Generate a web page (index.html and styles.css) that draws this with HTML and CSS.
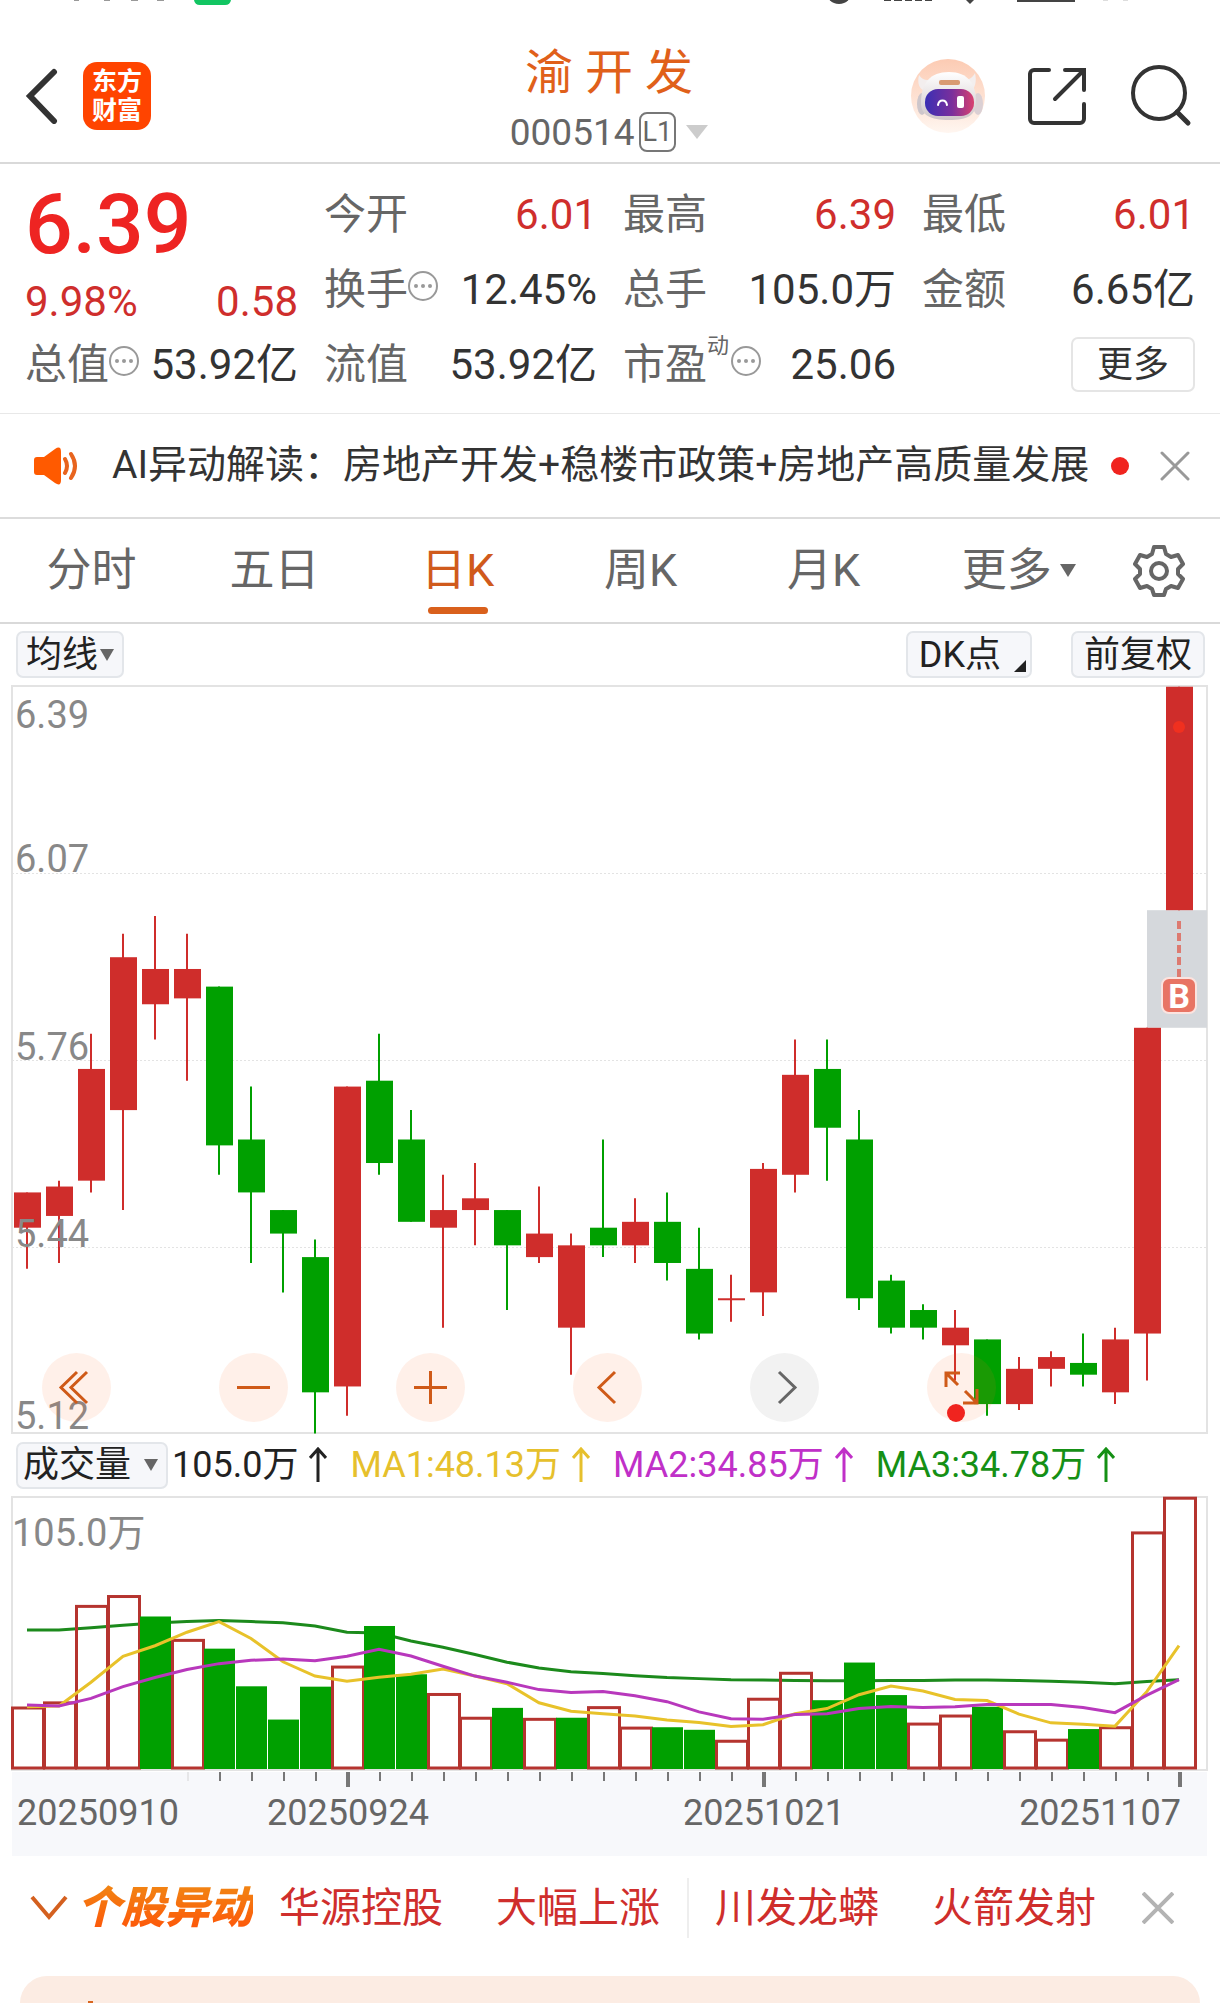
FILE: index.html
```html
<!DOCTYPE html>
<html lang="zh-CN">
<head>
<meta charset="utf-8">
<meta name="viewport" content="width=device-width, initial-scale=1">
<title>渝开发 000514</title>
<link rel="stylesheet" href="styles.css">
</head>
<body>
<header class="header">
  <svg class="status" viewBox="0 0 1220 6" aria-hidden="true">
    <g fill="#999"><rect x="74" width="5" height="1"/><rect x="104" width="6" height="1"/><rect x="131" width="7" height="1"/><rect x="157" width="7" height="1"/></g>
    <path d="M194 -6h37v6a6 6 0 0 1-6 5h-25a6 6 0 0 1-6-5z" fill="#12c562"/>
    <g fill="#444"><circle cx="839" cy="-9" r="13"/><rect x="884" width="7" height="1"/><rect x="894" width="8" height="1"/><rect x="905" width="7" height="1"/><rect x="915" width="7" height="1"/><rect x="925" width="7" height="1"/><path d="M966 0h8l-4 4z"/><rect x="1017" width="58" height="2"/></g>
    <g fill="#ddd"><rect x="1103" width="5" height="1"/><rect x="1123" width="5" height="1"/></g>
  </svg>
  <div class="header-side">
    <button class="icon-btn" aria-label="返回"><svg width="34" height="56" viewBox="0 0 34 56"><path d="M30 4 6 28 30 53" fill="none" stroke="#333" stroke-width="6" stroke-linecap="round"/></svg></button>
    <div class="logo"><span>东方</span><span>财富</span></div>
  </div>
  <div class="title">
    <h1>渝 开 发</h1>
    <button class="code">000514<span class="level">L1</span><svg width="22" height="14" viewBox="0 0 22 14"><path d="M0 0h22L11 14z" fill="#ccc"/></svg></button>
  </div>
  <div class="header-side header-tools">
    <button class="icon-btn" aria-label="智能助手">
      <svg width="76" height="76" viewBox="0 0 76 76">
        <defs>
          <linearGradient id="halo" x1="0" y1="0" x2="0" y2="1"><stop offset="0" stop-color="#fccbb3"/><stop offset="1" stop-color="#fff6f0"/></linearGradient>
          <linearGradient id="visor"><stop offset="0" stop-color="#3a2fb4"/><stop offset=".55" stop-color="#7a2f9c"/><stop offset="1" stop-color="#d8406f"/></linearGradient>
          <linearGradient id="shell" x1="0" y1="0" x2="0" y2="1"><stop offset="0" stop-color="#fff"/><stop offset="1" stop-color="#cfc6c8"/></linearGradient>
        </defs>
        <circle cx="38" cy="38" r="37" fill="url(#halo)"/>
        <path d="M9 17c-2 8 0 14 6 16l11-11c-8 1-14 0-17-5zM65 15c2 9 0 15-4 18l-12-11c8 1 13-1 16-7z" fill="#f3eeee"/>
        <ellipse cx="12" cy="46" rx="5" ry="11" fill="#cdc6cb"/><ellipse cx="68" cy="46" rx="5" ry="11" fill="#dbd0d4"/>
        <path d="M11 45c0-20 9-31 28-31s27 12 27 30c0 13-8 18-27 18S11 57 11 45z" fill="url(#shell)"/>
        <rect x="29" y="22" width="21" height="5" rx="2" fill="#d99b73"/>
        <rect x="15" y="31" width="49" height="27" rx="13" fill="url(#visor)"/>
        <path d="M28 47c1-6 8-6 9 0" fill="none" stroke="#fff" stroke-width="2" stroke-linecap="round"/><rect x="47" y="38" width="7" height="12" rx="2" fill="#fff"/>
      </svg>
    </button>
    <button class="icon-btn" aria-label="分享"><svg width="60" height="60" viewBox="0 0 60 60"><path d="M22 4H7a4 4 0 0 0-4 4v45a4 4 0 0 0 4 4h46a4 4 0 0 0 4-4V38M38 4h19v20M56 5 28 33" fill="none" stroke="#333" stroke-width="4" stroke-linecap="round"/></svg></button>
    <button class="icon-btn" aria-label="搜索"><svg width="62" height="62" viewBox="0 0 62 62"><circle cx="29" cy="28" r="26" fill="none" stroke="#333" stroke-width="4"/><path d="m47 47 11 11" stroke="#333" stroke-width="5" stroke-linecap="round"/></svg></button>
  </div>
</header>

<section class="quote">
  <div class="quote-main">
    <strong>6.39</strong>
    <div class="pair up"><span>9.98%</span><span>0.58</span></div>
  </div>
  <div class="pair"><span class="name">今开</span><span class="up">6.01</span></div>
  <div class="pair"><span class="name">最高</span><span class="up">6.39</span></div>
  <div class="pair"><span class="name">最低</span><span class="up">6.01</span></div>
  <div class="pair"><span class="name">换手<svg class="info" viewBox="0 0 30 30"><use href="#info"/></svg></span><span>12.45%</span></div>
  <div class="pair"><span class="name">总手</span><span>105.0万</span></div>
  <div class="pair"><span class="name">金额</span><span>6.65亿</span></div>
  <div class="pair"><span class="name">总值<svg class="info" viewBox="0 0 30 30"><use href="#info"/></svg></span><span>53.92亿</span></div>
  <div class="pair"><span class="name">流值</span><span>53.92亿</span></div>
  <div class="pair"><span class="name">市盈<sup>动</sup><svg class="info" viewBox="0 0 30 30"><use href="#info"/></svg></span><span>25.06</span></div>
  <div class="pair pair-end"><button class="more">更多</button></div>
  <svg class="defs" aria-hidden="true"><symbol id="info" viewBox="0 0 30 30"><circle cx="15" cy="15" r="14" fill="none" stroke="#999" stroke-width="2"/><g fill="#999"><circle cx="8" cy="15" r="2"/><circle cx="15" cy="15" r="2"/><circle cx="22" cy="15" r="2"/></g></symbol></svg>
</section>

<section class="notice">
  <svg width="44" height="38" viewBox="0 0 44 38" aria-hidden="true"><path d="M0 13q0-3 3-3h7L21 2q6-4 6 3v28q0 7-6 3L10 28H3q-3 0-3-3z" fill="#ff5a00"/><path d="M31 12q4 7 0 14M37 7q8 12 0 24" fill="none" stroke="#e8641e" stroke-width="4" stroke-linecap="round"/></svg>
  <a href="#notice">AI异动解读：房地产开发+稳楼市政策+房地产高质量发展</a>
  <i class="dot"></i>
  <button class="icon-btn" aria-label="关闭提示"><svg width="30" height="30" viewBox="0 0 30 30"><path d="m2 2 26 26M28 2 2 28" stroke="#999" stroke-width="3" stroke-linecap="round"/></svg></button>
</section>

<nav class="tabs">
  <button>分时</button>
  <button>五日</button>
  <button class="active">日K</button>
  <button>周K</button>
  <button>月K</button>
  <button>更多<svg width="16" height="13" viewBox="0 0 16 13"><path d="M0 0h16L8 13z" fill="#666"/></svg></button>
  <button class="settings" aria-label="设置"><svg width="52" height="52" viewBox="0 0 52 52" fill="none" stroke="#666" stroke-width="4" stroke-linejoin="round"><path d="M21 2h10l2 7 5 3 7-2 5 9-5 5v5l5 5-5 9-7-2-5 3-2 6H21l-2-6-5-3-7 2-5-9 5-5v-5l-5-5 5-9 7 2 5-3z"/><circle cx="26" cy="26" r="8"/></svg></button>
</nav>

<section class="toolbar">
  <button class="chip chip-ma">均线<svg width="14" height="12" viewBox="0 0 14 12"><path d="M0 0h14L7 12z" fill="#666"/></svg></button>
  <button class="chip chip-dk">DK点<svg width="12" height="12" viewBox="0 0 12 12"><path d="M12 0v12H0z" fill="#222"/></svg></button>
  <button class="chip chip-adj">前复权</button>
</section>

<section class="kline">
  <svg id="kline" class="plot" viewBox="0 0 1220 749" role="img" aria-label="日K线"></svg>
  <div class="controls">
    <button aria-label="最早"><svg viewBox="0 0 69 69"><path d="M35 19 19 34.500 35 50M45 19 29 34.500 45 50"/></svg></button>
    <button aria-label="缩小"><svg viewBox="0 0 69 69"><path d="M18 34.500h33"/></svg></button>
    <button aria-label="放大"><svg viewBox="0 0 69 69"><path d="M18 34.500h33M34.500 18v33"/></svg></button>
    <button aria-label="向前"><svg viewBox="0 0 69 69"><path d="M42 19 26 34.500 42 50"/></svg></button>
    <button class="off" aria-label="向后"><svg viewBox="0 0 69 69"><path d="m29 19 16 15.500L29 50"/></svg></button>
    <button class="expand" aria-label="全屏"><svg viewBox="0 0 69 69"><path d="M19 34V20h14M19 20l12 12M50 36v14H36M50 50 38 38"/></svg><i class="dot"></i></button>
  </div>
</section>

<section class="legend">
  <button class="chip chip-vol">成交量<svg width="14" height="12" viewBox="0 0 14 12"><path d="M0 0h14L7 12z" fill="#666"/></svg></button>
  <span class="ma">105.0万<svg viewBox="0 0 18 36"><use href="#arrow"/></svg></span>
  <span class="ma ma1">MA1:48.13万<svg viewBox="0 0 18 36"><use href="#arrow"/></svg></span>
  <span class="ma ma2">MA2:34.85万<svg viewBox="0 0 18 36"><use href="#arrow"/></svg></span>
  <span class="ma ma3">MA3:34.78万<svg viewBox="0 0 18 36"><use href="#arrow"/></svg></span>
  <svg class="defs" aria-hidden="true"><symbol id="arrow" viewBox="0 0 18 36"><path d="M9 35V2M1 11l8-9 8 9" fill="none" stroke="currentColor" stroke-width="3"/></symbol></svg>
</section>

<svg id="volume" class="plot" viewBox="0 0 1220 360" role="img" aria-label="成交量"></svg>

<section class="movers">
  <svg width="38" height="26" viewBox="0 0 38 26" aria-hidden="true"><path d="m2 2 17 20L36 2" fill="none" stroke="#d4601f" stroke-width="4"/></svg>
  <h2>个股异动</h2>
  <a href="#m1"><span>华源控股</span><span>大幅上涨</span></a>
  <a href="#m2"><span>川发龙蟒</span><span>火箭发射</span></a>
  <button class="icon-btn" aria-label="关闭异动"><svg width="32" height="32" viewBox="0 0 32 32"><path d="m1 1 30 30M31 1 1 31" stroke="#b3b3b3" stroke-width="4"/></svg></button>
</section>

<section class="card" aria-hidden="true"><i></i></section>
<script src="chart.js"></script>
</body>
</html>
```
FILE: styles.css
```css
* { box-sizing: border-box; }
body {
  margin: 0;
  background: #fff;
  color: #333;
  font-family: Roboto, "Noto Sans CJK SC", sans-serif;
  font-size: 42px;
  line-height: 1;
}
button { margin: 0; padding: 0; border: 0; background: none; color: inherit; font: inherit; cursor: pointer; }
a { color: inherit; text-decoration: none; }
h1, h2 { margin: 0; font-weight: 400; }
svg { display: block; flex: none; }
.defs { position: absolute; width: 0; height: 0; }
.icon-btn { display: block; flex: none; }
.up { color: #cf2e2c; }
.dot { display: block; flex: none; width: 18px; height: 18px; border-radius: 50%; background: #f0241f; }

.header {
  position: relative;
  display: grid;
  grid-template-columns: 1fr auto 1fr;
  height: 164px;
  padding: 30px 26px 0 24px;
  border-bottom: 2px solid #d9d9d9;
}
.status { position: absolute; top: 0; left: 0; width: 100%; }
.header-side { display: flex; align-items: center; gap: 25px; }
.header-tools { justify-content: flex-end; gap: 41px; padding-right: 2px; }
.header-tools .icon-btn:last-child { margin-left: 2px; }
.logo {
  display: flex;
  flex-direction: column;
  align-items: center;
  justify-content: center;
  gap: 4px;
  width: 68px;
  height: 68px;
  border-radius: 14px;
  background: #ff4400;
  color: #fff;
  font-size: 25px;
  font-weight: 700;
}
.title { display: flex; flex-direction: column; align-items: center; gap: 6px; padding-top: 17px; }
.title h1 { height: 52px; font-size: 48px; line-height: 52px; color: #e0601a; }
.code { display: flex; align-items: center; height: 54px; font-size: 37px; color: #666; }
.level {
  display: flex;
  align-items: center;
  height: 40px;
  margin: 0 10px 0 4px;
  padding: 0 2px;
  border: 2px solid #777;
  border-radius: 8px;
  font-size: 27px;
}

.quote {
  display: grid;
  grid-template-columns: repeat(4, 1fr);
  grid-auto-rows: 75px;
  column-gap: 26px;
  padding: 13px 25px 11px;
  border-bottom: 1px solid #e8e8e8;
}
.quote-main { grid-row: span 2; display: flex; flex-direction: column; justify-content: space-between; }
.quote-main strong { font-size: 84px; line-height: 96px; font-weight: 500; color: #ee2422; }
.quote-main .pair { height: 50px; }
.pair { display: flex; align-items: center; justify-content: space-between; white-space: nowrap; }
.pair-end { justify-content: flex-end; }
.name { display: flex; align-items: center; color: #666; }
.name sup { align-self: flex-start; margin: -9px 2px 0 0; font-size: 22px; line-height: 22px; }
.info { width: 30px; height: 30px; margin-top: -7px; }
.more { width: 124px; height: 55px; border: 2px solid #e5e5e5; border-radius: 7px; font-size: 36px; }

.notice { display: flex; align-items: center; height: 105px; padding: 0 30px 0 34px; border-bottom: 2px solid #dcdcdc; font-size: 39px; white-space: nowrap; }
.notice a { flex: 1; margin-left: 34px; }
.notice .dot { margin-right: 31px; }

.tabs { display: grid; grid-template-columns: repeat(5, 15fr) 17fr 8fr; height: 105px; border-bottom: 2px solid #d9d9d9; font-size: 45px; color: #666; }
.tabs button { position: relative; display: flex; align-items: center; justify-content: center; gap: 8px; }
.tabs .active { color: #d05a1c; }
.tabs .active::after { content: ""; position: absolute; bottom: 8px; left: 50%; width: 60px; height: 7px; margin-left: -30px; border-radius: 4px; background: #d9601c; }
.tabs .settings { padding-right: 24px; }

.toolbar { display: flex; align-items: center; height: 61px; padding: 0 15px 0 16px; }
.chip {
  display: flex;
  align-items: center;
  justify-content: center;
  gap: 4px;
  height: 47px;
  padding: 0 9px;
  border: 2px solid #e3e6ea;
  border-radius: 7px;
  background: #f6f7fa;
  color: #222;
  font-size: 36px;
  white-space: nowrap;
}
.chip-ma { gap: 2px; padding: 0 8px; }
.chip-dk { gap: 13px; margin-left: auto; padding: 0 4px 0 11px; }
.chip-dk svg { align-self: flex-end; margin-bottom: 4px; }
.chip-adj { margin-left: 39px; padding: 0 11px; }

.plot { width: 100%; height: auto; overflow: visible; }
.plot text { fill: #888; font-size: 38px; }
.plot .date { fill: #666; font-size: 36px; }
.plot .mark { fill: #fff; font-size: 34px; font-weight: 700; }
.kline { position: relative; }
.controls { position: absolute; left: 42px; bottom: 12px; display: flex; gap: 108px; }
.controls button { position: relative; width: 69px; height: 69px; border-radius: 50%; background: rgba(255, 110, 40, 0.1); color: #cf5a18; }
.controls .off { background: #f2f2f2; color: #666; }
.controls svg { width: 69px; height: 69px; fill: none; stroke: currentColor; stroke-width: 3; }
.controls .dot { position: absolute; left: 20px; bottom: 0; }

.legend { display: flex; align-items: center; gap: 23px; height: 62px; padding-left: 16px; font-size: 36px; color: #222; }
.chip-vol { gap: 13px; margin-right: -19px; padding: 0 8px 0 5px; }
.ma { display: flex; align-items: center; gap: 11px; white-space: nowrap; }
.ma svg { width: 18px; height: 36px; }
.ma1 { color: #e6c02c; }
.ma2 { color: #c030c8; }
.ma3 { color: #159015; }

.movers { display: flex; align-items: center; height: 120px; padding: 0 46px 16px 30px; color: #cf2e2c; font-size: 41px; white-space: nowrap; }
.movers h2 {
  margin: 0 26px 0 9px;
  font-size: 44px;
  line-height: 56px;
  font-style: italic;
  font-weight: 900;
  background: linear-gradient(#f08a14, #ff5008);
  -webkit-background-clip: text;
  background-clip: text;
  color: transparent;
}
.movers a { display: flex; align-items: center; gap: 53px; height: 60px; }
.movers a + a { margin-left: 27px; padding-left: 26px; border-left: 2px solid #eee; }
.movers .icon-btn { margin-left: auto; }

.card { height: 27px; margin: 0 20px; padding: 25px 0 0 68px; border-radius: 48px 48px 0 0; background: #fcece3; overflow: hidden; }
.card i { display: block; width: 5px; height: 2px; background: #d9661f; }
```
FILE: chart.js
```js
const RED = '#cf2d2b';
const GREEN = '#00a000';
const STEP = 32;
const cx = i => 27 + i * STEP;

// [direction, open/close top, open/close bottom, high, low], in cents above 5.12
const candles = [
  ['r', 41, 35, 41, 28], ['r', 42, 37, 43, 29], ['r', 62, 43, 68, 41], ['r', 81, 55, 85, 38],
  ['r', 79, 73, 88, 67], ['r', 79, 74, 85, 60], ['g', 76, 49, 76, 44], ['g', 50, 41, 59, 29],
  ['g', 38, 34, 38, 24], ['g', 30, 7, 33, 0], ['r', 59, 8, 59, 3], ['g', 60, 46, 68, 44],
  ['g', 50, 36, 55, 36], ['r', 38, 35, 44, 18], ['r', 40, 38, 46, 32], ['g', 38, 32, 38, 21],
  ['r', 34, 30, 42, 29], ['r', 32, 18, 34, 10], ['g', 35, 32, 50, 30], ['r', 36, 32, 40, 29],
  ['g', 36, 29, 41, 26], ['g', 28, 17, 35, 16], ['r', 23, 23, 27, 19], ['r', 45, 24, 46, 20],
  ['r', 61, 44, 67, 41], ['g', 62, 52, 67, 43], ['g', 50, 23, 55, 21], ['g', 26, 18, 27, 17],
  ['g', 21, 18, 22, 16], ['r', 18, 15, 21, 9], ['g', 16, 5, 16, 3], ['r', 11, 5, 13, 4],
  ['r', 13, 11, 14, 8], ['g', 12, 10, 17, 8], ['r', 16, 7, 18, 5], ['r', 69, 17, 69, 9],
  ['r', 127, 89, 127, 89]
];

const py = c => 748.5 - c * 5.88;
let k = '<g stroke="#e3e3e3" stroke-width="2" fill="none"><path d="M12 1h1195v747H12z"/>' +
  '<path stroke-dasharray="2 2" stroke-width="1" d="M12 188.500h1195M12 375.500h1195M12 562.500h1195"/></g>' +
  `<rect x="1147" y="${py(89)}" width="60" height="${py(69) - py(89)}" fill="#d5d8dc"/>`;
candles.forEach(([dir, top, bottom, high, low], i) => {
  const color = dir === 'r' ? RED : GREEN;
  const x = cx(i);
  k += `<path d="M${x} ${py(high)}V${py(low)}" stroke="${color}" stroke-width="2"/>`;
  k += `<rect x="${x - 13}" y="${py(top)}" width="27" height="${Math.max(2, (top - bottom) * 5.88)}" fill="${color}"/>`;
});
[['6.39', 43], ['6.07', 187], ['5.76', 375], ['5.44', 562], ['5.12', 744]].forEach(([t, y]) => {
  k += `<text x="15" y="${y}">${t}</text>`;
});
k += '<circle cx="1179" cy="42" r="6" fill="#f0301f"/>' +
  '<path d="M1179 236v57" stroke="#dd7a70" stroke-width="4" stroke-dasharray="8 4"/>' +
  '<rect x="1162" y="293" width="34" height="35" rx="7" fill="#e87464" stroke="#fbe3df" stroke-width="2"/>' +
  '<text class="mark" x="1179" y="323" text-anchor="middle">B</text>';
document.getElementById('kline').innerHTML = k;

const volumes = [171, 185, 449, 476, 420, 356, 332, 229, 138, 228, 283, 394, 262, 208, 143, 170, 140, 143, 172,
  116, 117, 110, 80, 195, 266, 191, 294, 205, 127, 149, 173, 106, 83, 112, 117, 650, 745];
const kinds = 'rrrrgrggggrggrrgrgrrggrrrgggrrgrrgrrr';
const ma1 = [173, 175, 240, 311, 340, 377, 406, 360, 296, 257, 243, 254, 262, 276, 257, 236, 184, 161, 154, 148,
  137, 130, 119, 124, 154, 168, 206, 230, 216, 193, 190, 153, 129, 125, 120, 215, 340];
const ma2 = [178, 175, 196, 228, 253, 275, 291, 300, 304, 299, 311, 330, 312, 284, 257, 240, 220, 212, 215, 203,
  187, 159, 140, 139, 152, 154, 168, 174, 171, 173, 179, 179, 179, 171, 157, 205, 247];
const ma3 = [383, 383, 389, 396, 402, 406, 409, 406, 403, 394, 377, 375, 353, 336, 316, 295, 279, 269, 264, 258,
  253, 250, 247, 246, 245, 244, 244, 245, 245, 246, 246, 245, 243, 240, 236, 242, 247];

const vy = v => 274 - v * 0.3655;
const line = (data, color) =>
  `<polyline fill="none" stroke="${color}" stroke-width="3" points="${data.map((v, i) => cx(i) + ',' + vy(v)).join(' ')}"/>`;
let s = '<path d="M12 1h1195v273H12z" fill="none" stroke="#e3e3e3" stroke-width="2"/>' +
  '<rect x="12" y="276" width="1195" height="84" fill="#f7f8fb"/>' +
  '<text x="12" y="50">105.0万</text>' + line(ma3, '#1c8a1c');
volumes.forEach((v, i) => {
  const x = cx(i) - 15;
  s += kinds[i] === 'g'
    ? `<rect x="${x}" y="${vy(v)}" width="31" height="${273 - vy(v)}" fill="${GREEN}"/>`
    : `<rect x="${x + 0.5}" y="${vy(v) + 0.5}" width="31" height="${271.5 - vy(v)}" fill="none" stroke="#b5342f" stroke-width="3"/>`;
});
s += line(ma1, '#e8c22a') + line(ma2, '#b838bc');
for (let i = 5; i < 37; i++) {
  const major = i === 10 || i === 23 || i === 36;
  s += `<path d="M${cx(i) + 1} 276v${major ? 15 : 9}" stroke="${i === 5 ? '#e6e6e8' : '#777'}" stroke-width="${major ? 4 : 2}"/>`;
}
[['20250910', 17, 'start'], ['20250924', 348, 'middle'], ['20251021', 764, 'middle'], ['20251107', 1181, 'end']].forEach(([t, x, a]) => {
  s += `<text class="date" x="${x}" y="329" text-anchor="${a}">${t}</text>`;
});
document.getElementById('volume').innerHTML = s;
```
